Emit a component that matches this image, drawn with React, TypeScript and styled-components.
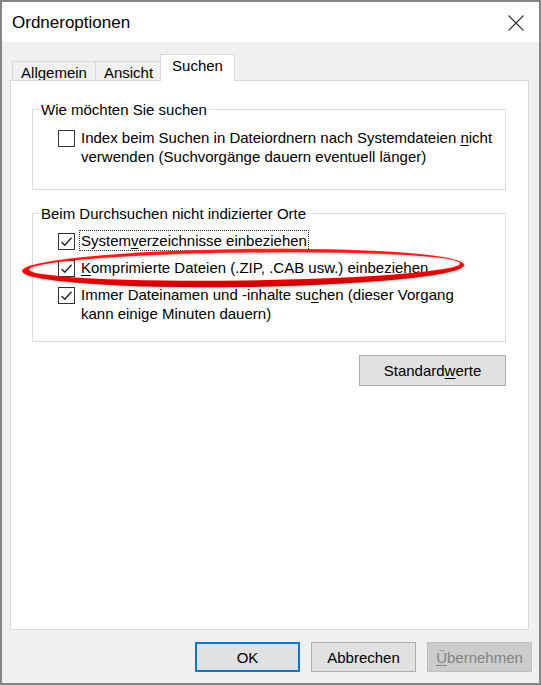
import React from 'react'
import styled, { createGlobalStyle, css } from 'styled-components'

const GlobalStyle = createGlobalStyle`
	html, body {
		margin: 0;
		padding: 0;
		background: #ffffff;
	}
	body {
		font-family: "Liberation Sans", Arial, sans-serif;
		font-size: 15px;
		color: #000;
	}
`

const Dialog = styled.div`
	position: relative;
	box-sizing: border-box;
	width: 541px;
	height: 685px;
	border: 2px solid #858585;
	display: flex;
	flex-direction: column;
	background: #f0f0f0;
`

const TitleBar = styled.div`
	height: 40px;
	flex: none;
	background: #fff;
	display: flex;
	align-items: center;
	justify-content: space-between;
	padding: 1px 15px 0 10px;
	box-sizing: border-box;
	font-size: 17px;
	color: #000;
`

const Body = styled.div`
	flex: 1;
	display: flex;
	flex-direction: column;
	padding: 12px 10px 11px 8px;
	min-height: 0;
`

const TabStrip = styled.div`
	height: 26px;
	flex: none;
	display: flex;
	align-items: flex-end;
	padding-left: 2px;
`

const Tab = styled.div<{ $active?: boolean; $w: number }>`
	box-sizing: border-box;
	width: ${p => p.$w}px;
	margin-left: -1px;
	border: 1px solid #d9d9d9;
	border-bottom: none;
	text-align: center;
	line-height: 19px;
	white-space: nowrap;
	${p => p.$active
		? css`
			position: relative;
			z-index: 1;
			height: 27px;
			margin-left: -2px;
			margin-bottom: -1px;
			padding-top: 1px;
			background: #fff;
		`
		: css`
			height: 19px;
			padding-top: 1px;
			background: #f0f0f0;
		`}
	&:first-child {
		margin-left: 0;
	}
`

const Panel = styled.div`
	flex: 1;
	background: #fff;
	border: 1px solid #d9d9d9;
	padding: 19px 22px 0 21px;
	display: flex;
	flex-direction: column;
`

const Group = styled.fieldset<{ $top?: number; $bottom: number; $first?: boolean }>`
	margin: ${p => p.$top ?? 0}px 0 0 0;
	border: 1px solid #dcdcdc;
	padding: ${p => (p.$first ? 9 : 8)}px 0 ${p => p.$bottom}px 0;
	min-width: 0;
	display: flex;
	flex-direction: column;
	gap: 8px;
`

const Legend = styled.legend`
	margin-left: 6px;
	padding: 0 2px;
	line-height: 19px;
`

const Row = styled.div`
	display: flex;
	align-items: flex-start;
	gap: 7px;
	padding-left: 25px;
	line-height: 19px;
`

const Box = styled.span`
	box-sizing: border-box;
	flex: none;
	width: 17px;
	height: 17px;
	margin-top: 2px;
	margin-right: -1px;
	border: 1px solid #333;
	background: #fff;
	display: flex;
	align-items: center;
	justify-content: center;
`

const Label = styled.span<{ $focused?: boolean }>`
	display: inline-block;
	white-space: nowrap;
	padding: 0 1px;
	margin-left: -1px;
	${p => p.$focused && css`
		outline: 1px dotted #333;
		outline-offset: 0;
	`}
	u {
		text-underline-offset: 2px;
	}
`

const Defaults = styled.div`
	display: flex;
	justify-content: flex-end;
	margin-top: 13px;
`

const Button = styled.button<{ $w: number; $h?: number; $primary?: boolean; $disabled?: boolean }>`
	box-sizing: border-box;
	width: ${p => p.$w}px;
	height: ${p => p.$h ?? 30}px;
	font-family: "Liberation Sans", Arial, sans-serif;
	font-size: 15px;
	color: #000;
	background: #e1e1e1;
	border: 1px solid #adadad;
	padding: 0;
	${p => p.$primary && css`
		border-color: #0078d7;
		box-shadow: inset 0 0 0 1px #0078d7;
	`}
	${p => p.$disabled && css`
		background: #cccccc;
		border-color: #bfbfbf;
		color: #838383;
	`}
	u {
		text-underline-offset: 2px;
	}
`

const ButtonRow = styled.div`
	display: flex;
	justify-content: flex-end;
	gap: 11px;
	margin-top: 12px;
	margin-right: -3px;
	flex: none;
`

const Marker = styled.svg`
	position: absolute;
	left: 14px;
	top: 240px;
	width: 455px;
	height: 52px;
	pointer-events: none;
	overflow: visible;
	filter: drop-shadow(1px 1px 1px rgba(0, 0, 0, 0.3));
`

const Check = ({ on }: { on?: boolean }) => (
	<Box>
		{on && (
			<svg width="15" height="15" viewBox="0 0 15 15">
				<polyline points="2.5,8 5.8,11.2 12.5,3.8" fill="none" stroke="#222" strokeWidth="1.3" />
			</svg>
		)}
	</Box>
)

const CloseIcon = () => (
	<svg width="16" height="16" viewBox="0 0 16 16">
		<path d="M0.5 0.5 L15.5 15.5 M15.5 0.5 L0.5 15.5" stroke="#333" strokeWidth="1.1" fill="none" />
	</svg>
)

const App = () => {
	return (
		<>
			<GlobalStyle />
			<Dialog>
				<TitleBar>
					<span>Ordneroptionen</span>
					<CloseIcon />
				</TitleBar>
				<Body>
					<TabStrip>
						<Tab $w={84}>Allgemein</Tab>
						<Tab $w={67}>Ansicht</Tab>
						<Tab $w={75} $active>Suchen</Tab>
					</TabStrip>
					<Panel>
						<Group $first $bottom={23}>
							<Legend>Wie möchten Sie suchen</Legend>
							<Row>
								<Check />
								<Label>
									Index beim Suchen in Dateiordnern nach Systemdateien <u>n</u>icht<br />
									verwenden (Suchvorgänge dauern eventuell länger)
								</Label>
							</Row>
						</Group>
						<Group $top={14} $bottom={18}>
							<Legend>Beim Durchsuchen nicht indizierter Orte</Legend>
							<Row>
								<Check on />
								<Label $focused>System<u>v</u>erzeichnisse einbeziehen</Label>
							</Row>
							<Row>
								<Check on />
								<Label><u>K</u>omprimierte Dateien (.ZIP, .CAB usw.) einbeziehen</Label>
							</Row>
							<Row>
								<Check on />
								<Label>
									Immer Dateinamen und -inhalte su<u>c</u>hen (dieser Vorgang<br />
									kann einige Minuten dauern)
								</Label>
							</Row>
						</Group>
						<Defaults>
							<Button $w={147} $h={31}>Standard<u>w</u>erte</Button>
						</Defaults>
					</Panel>
					<ButtonRow>
						<Button $w={105} $primary>OK</Button>
						<Button $w={105}>Abbrechen</Button>
						<Button $w={105} $disabled><u>Ü</u>bernehmen</Button>
					</ButtonRow>
				</Body>
				<Marker viewBox="0 0 455 52">
					<defs>
						<linearGradient id="ink" x1="0" y1="0" x2="0" y2="1">
							<stop offset="0" stopColor="#ff2020" />
							<stop offset="1" stopColor="#d00000" />
						</linearGradient>
					</defs>
					<g transform="rotate(-0.8 226 25.5)">
						<path
							fill="url(#ink)"
							fillRule="evenodd"
							d="M 6 26 A 221 19 0 1 0 448 26 A 221 19 0 1 0 6 26 Z M 13 24.5 A 215.5 14 0 1 0 444 24.5 A 215.5 14 0 1 0 13 24.5 Z"
						/>
					</g>
				</Marker>
			</Dialog>
		</>
	)
}

export default App
